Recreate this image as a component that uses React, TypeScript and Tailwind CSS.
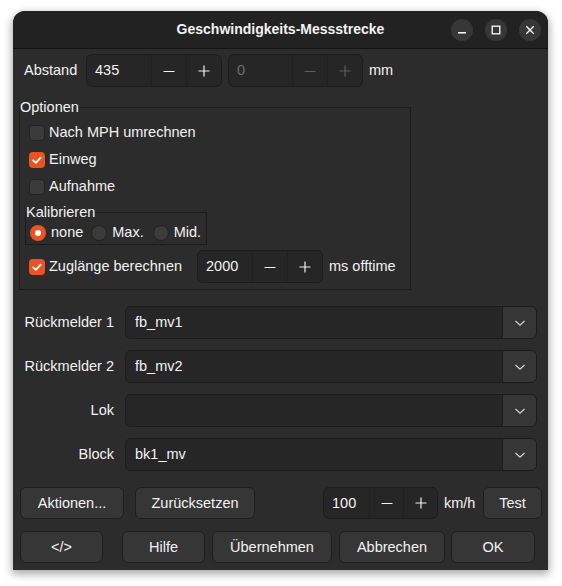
import type { ReactNode } from 'react';

function MinusIcon({ dim }: { dim?: boolean }) {
  return (
    <svg width="12" height="12" viewBox="0 0 12 12" className={dim ? 'text-[#5c5c5c]' : 'text-[#f2f2f2]'}>
      <path d="M0.5 6.5h11" stroke="currentColor" strokeWidth="1.2" />
    </svg>
  );
}

function PlusIcon({ dim }: { dim?: boolean }) {
  return (
    <svg width="12" height="12" viewBox="0 0 12 12" className={dim ? 'text-[#5c5c5c]' : 'text-[#f2f2f2]'}>
      <path d="M0.5 6h11M6 0.5v11" stroke="currentColor" strokeWidth="1.2" />
    </svg>
  );
}

function Chevron() {
  return (
    <svg width="12" height="8" viewBox="0 0 12 8" className="text-[#d6d6d6]">
      <path d="M1.5 2l4.5 4.2L10.5 2" fill="none" stroke="currentColor" strokeWidth="1.2" />
    </svg>
  );
}

function Spin({ value, disabled, className, btn }: { value: string; disabled?: boolean; className: string; btn: string }) {
  return (
    <div className={`flex h-[33px] overflow-hidden rounded-[6px] border border-[#1c1c1c] bg-[#262626] ${className}`}>
      <div className={`flex flex-1 items-center pl-[8px] ${disabled ? 'text-[#6e6e6e]' : 'text-[#f2f2f2]'}`}>{value}</div>
      <div className={`flex items-center justify-center border-l border-[#202020] ${btn}`}>
        <MinusIcon dim={disabled} />
      </div>
      <div className={`flex items-center justify-center border-l border-[#202020] ${btn}`}>
        <PlusIcon dim={disabled} />
      </div>
    </div>
  );
}

function CheckBox({ checked, label }: { checked?: boolean; label: string }) {
  return (
    <div className="flex items-center gap-[4px]">
      {checked ? (
        <div className="flex h-[16px] w-[16px] items-center justify-center rounded-[4px] bg-[#e95420]">
          <svg width="16" height="16" viewBox="0 0 16 16">
            <path d="M4.2 8.3l2.6 2.5 4.9-5.2" fill="none" stroke="#ffffff" strokeWidth="1.8" strokeLinecap="round" strokeLinejoin="round" />
          </svg>
        </div>
      ) : (
        <div className="h-[16px] w-[16px] rounded-[4px] border border-[#222222] bg-[#3b3b3b]" />
      )}
      <span>{label}</span>
    </div>
  );
}

function Radio({ checked, label, className = '' }: { checked?: boolean; label: string; className?: string }) {
  return (
    <div className={`flex items-center gap-[5px] ${className}`}>
      {checked ? (
        <div className="flex h-[16px] w-[16px] items-center justify-center rounded-full bg-[#e95420]">
          <div className="h-[6px] w-[6px] rounded-full bg-white" />
        </div>
      ) : (
        <div className="h-[16px] w-[16px] rounded-full border border-[#222222] bg-[#3b3b3b]" />
      )}
      <span>{label}</span>
    </div>
  );
}

function Combo({ label, value }: { label: string; value: string }) {
  return (
    <div className="flex h-[33px] items-center px-[11px]">
      <div className="w-[90px] text-right">{label}</div>
      <div className="ml-[11px] flex h-full flex-1 overflow-hidden rounded-[6px] border border-[#1c1c1c] bg-[#262626]">
        <div className="flex flex-1 items-center pl-[9px]">{value}</div>
        <div className="flex w-[34px] items-center justify-center border-l border-[#1c1c1c] bg-[#363636]">
          <Chevron />
        </div>
      </div>
    </div>
  );
}

function Btn({ children, className }: { children: ReactNode; className: string }) {
  return (
    <div className={`flex h-[32px] items-center justify-center rounded-[6px] border border-[#1e1e1e] bg-[#363636] ${className}`}>
      {children}
    </div>
  );
}

function WinBtn({ children }: { children: ReactNode }) {
  return <div className="flex h-[22px] w-[22px] items-center justify-center rounded-full bg-[#373737]">{children}</div>;
}

export default function App() {
  return (
    <div className="min-h-[586px] bg-white pl-[13px] pt-[11px] font-['Liberation_Sans',Arial,sans-serif] text-[14.5px] leading-[17px] text-[#f2f2f2]">
      <div className="w-[535px] overflow-hidden rounded-t-[12px] bg-[#2c2c2c] shadow-[0_3px_9px_1px_rgba(0,0,0,0.35)]">
        {/* header bar */}
        <div className="grid h-[37px] grid-cols-[1fr_auto_1fr] items-center bg-[#222222]">
          <div />
          <div className="text-[14px] font-bold text-[#f2f2f2]">Geschwindigkeits-Messstrecke</div>
          <div className="flex justify-end gap-[12px] pr-[7px]">
            <WinBtn>
              <svg width="10" height="10" viewBox="0 0 10 10">
                <path d="M1 7.8h8" stroke="#ffffff" strokeWidth="1.4" />
              </svg>
            </WinBtn>
            <WinBtn>
              <svg width="10" height="10" viewBox="0 0 10 10">
                <rect x="1.2" y="1.2" width="7.6" height="7.6" fill="none" stroke="#ffffff" strokeWidth="1.3" />
              </svg>
            </WinBtn>
            <WinBtn>
              <svg width="10" height="10" viewBox="0 0 10 10">
                <path d="M1.3 1.3l7.4 7.4M8.7 1.3l-7.4 7.4" stroke="#ffffff" strokeWidth="1.3" />
              </svg>
            </WinBtn>
          </div>
        </div>
        <div className="h-px bg-[#131313]" />

        {/* Abstand */}
        <div className="mt-[5px] flex h-[33px] items-center pl-[11px]">
          <div className="w-[62px]">Abstand</div>
          <Spin value="435" className="w-[136px]" btn="w-[35px]" />
          <Spin value="0" disabled className="ml-[6px] w-[135px]" btn="w-[35px]" />
          <div className="ml-[6px]">mm</div>
        </div>

        {/* Optionen */}
        <fieldset className="ml-[6px] mt-[12px] w-[392px] border border-[#1c1c1c] pb-[6px] pt-[3px]">
          <legend>Optionen</legend>
          <div className="pl-[5px]">
            <div className="flex h-[27px] items-center pl-[4px]">
              <CheckBox label="Nach MPH umrechnen" />
            </div>
            <div className="flex h-[27px] items-center pl-[4px]">
              <CheckBox checked label="Einweg" />
            </div>
            <div className="flex h-[27px] items-center pl-[4px]">
              <CheckBox label="Aufnahme" />
            </div>
            <fieldset className="mt-[4px] w-[182px] border border-[#1c1c1c]">
              <legend>Kalibrieren</legend>
              <div className="flex h-[23px] items-center pl-[4px]">
                <Radio checked label="none" />
                <Radio label="Max." className="ml-[8px]" />
                <Radio label="Mid." className="ml-[9px]" />
              </div>
            </fieldset>
            <div className="mt-[5px] flex h-[33px] items-center pl-[4px]">
              <div className="w-[168px]">
                <CheckBox checked label="Zuglänge berechnen" />
              </div>
              <Spin value="2000" className="w-[126px]" btn="w-[35px]" />
              <div className="ml-[6px]">ms offtime</div>
            </div>
          </div>
        </fieldset>

        {/* Combos */}
        <div className="mt-[16px] flex flex-col gap-[11px]">
          <Combo label="Rückmelder 1" value="fb_mv1" />
          <Combo label="Rückmelder 2" value="fb_mv2" />
          <Combo label="Lok" value="" />
          <Combo label="Block" value="bk1_mv" />
        </div>

        {/* Buttons */}
        <div className="mt-[16px] flex items-center pl-[7px]">
          <Btn className="w-[104px]">Aktionen...</Btn>
          <Btn className="ml-[11px] w-[120px]">Zurücksetzen</Btn>
          <Spin value="100" className="ml-[68px] !h-[32px] w-[115px]" btn="w-[34px]" />
          <div className="ml-[6px] w-[39px]">km/h</div>
          <Btn className="w-[59px]">Test</Btn>
        </div>
        <div className="mt-[12px] flex items-center pb-[7px] pl-[7px]">
          <Btn className="w-[83px]">&lt;/&gt;</Btn>
          <Btn className="ml-[19px] w-[83px]">Hilfe</Btn>
          <Btn className="ml-[7px] w-[120px]">Übernehmen</Btn>
          <Btn className="ml-[7px] w-[106px]">Abbrechen</Btn>
          <Btn className="ml-[6px] w-[84px]">OK</Btn>
        </div>
      </div>
    </div>
  );
}
